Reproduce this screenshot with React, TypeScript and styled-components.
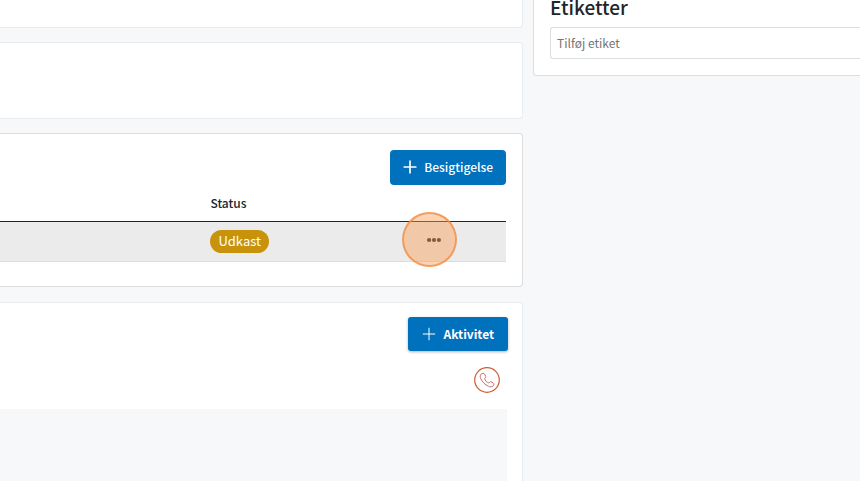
import React from "react";
import styled, { createGlobalStyle } from "styled-components";

const GlobalStyle = createGlobalStyle`
  * { box-sizing: border-box; }
  body {
    margin: 0;
    background: #f6f8fa;
    color: #212529;
    font-family: "Noto Sans CJK SC", "Noto Sans", sans-serif;
    font-size: 12px;
    line-height: 20px;
  }
  button, input { font: inherit; }
`;

const Page = styled.div`
  display: grid;
  grid-template-columns: minmax(0, 8fr) minmax(0, 5fr);
  gap: 10px;
  min-height: 100vh;
`;

const MainColumn = styled.main`
  display: flex;
  flex-direction: column;
  gap: 14px;
`;

const Card = styled.section<{ $strong?: boolean }>`
  background: #fff;
  border: 1px solid ${(p) => (p.$strong ? "#dcdddf" : "#e9ecef")};
  border-left: 0;
  border-radius: 0 4px 4px 0;
`;

const TopCard = styled(Card)`
  height: 28px;
  border-top: 0;
  border-radius: 0 0 4px 0;
`;

const EmptyCard = styled(Card)`
  height: 77px;
`;

const InspectionCard = styled(Card)`
  padding: 16px 16px 24px 0;
  margin-bottom: 1px;
`;

const ActivityCard = styled(Card)`
  flex: 1;
  display: flex;
  flex-direction: column;
  padding: 14px 14px 0 0;
  border-bottom: 0;
  border-radius: 0 4px 0 0;
`;

const Actions = styled.div`
  display: flex;
  justify-content: flex-end;
`;

const PrimaryButton = styled.button<{ $bold?: boolean }>`
  display: flex;
  align-items: center;
  gap: ${(p) => (p.$bold ? 8 : 7)}px;
  height: ${(p) => (p.$bold ? 34 : 35)}px;
  padding: ${(p) => (p.$bold ? "0 14px" : "0 13px 2px")};
  border: 0;
  border-radius: ${(p) => (p.$bold ? 3 : 4)}px;
  background: #0071bc;
  color: #fff;
  font-weight: ${(p) => (p.$bold ? 700 : 500)};
  box-shadow: ${(p) => (p.$bold ? "0 1px 3px rgba(0, 0, 0, 0.3)" : "none")};
  cursor: pointer;
`;

const Table = styled.table`
  width: 100%;
  table-layout: fixed;
  border-collapse: collapse;
`;

const HeadCell = styled.th<{ $width?: string }>`
  width: ${(p) => p.$width ?? "auto"};
  height: 36px;
  padding: 0 8px;
  border-bottom: 1px solid #212529;
  font-weight: 500;
  text-align: left;
`;

const Cell = styled.td`
  height: 40px;
  padding: 0 8px;
  background: #ebebeb;
  border-bottom: 1px solid #dcdddf;
`;

const Badge = styled.span`
  display: block;
  width: max-content;
  padding: 0 8px 2px;
  border-radius: 12px;
  background: #c8930a;
  color: #fff;
  font-size: 13px;
  line-height: 21px;
`;

const MenuButton = styled.button`
  position: relative;
  display: flex;
  align-items: center;
  justify-content: center;
  width: 32px;
  height: 22px;
  margin: 0 48px 2px auto;
  padding: 0;
  border: 0;
  background: none;
  color: #212529;
  cursor: pointer;
`;

const ClickMarker = styled.span`
  position: absolute;
  top: -17px;
  left: -16px;
  width: 55px;
  height: 55px;
  border: 2px solid rgba(240, 140, 70, 0.75);
  border-radius: 50%;
  background: rgba(248, 160, 88, 0.45);
  pointer-events: none;
`;

const PhoneRow = styled.div`
  display: flex;
  justify-content: flex-end;
  padding: 16px 8px;
`;

const PhoneButton = styled.button`
  display: flex;
  padding: 0;
  border: 0;
  border-radius: 50%;
  background: none;
  cursor: pointer;
`;

const ActivityPanel = styled.div`
  flex: 1;
  margin-right: 1px;
  background: #f6f8fa;
`;

const LabelsCard = styled.aside`
  align-self: start;
  padding: 0 0 16px 16px;
  background: #fff;
  border: 1px solid #dcdddf;
  border-width: 0 0 1px 1px;
  border-radius: 0 0 0 4px;
`;

const LabelsTitle = styled.h2`
  margin: 0 0 13px;
  font-size: 19px;
  font-weight: 500;
  line-height: 14px;
`;

const LabelInput = styled.input`
  display: block;
  width: 100%;
  height: 32px;
  padding: 0 6px 1px;
  border: 1px solid #dcdddf;
  border-right: 0;
  border-radius: 3px 0 0 3px;
  color: #212529;
  &::placeholder { color: #757575; opacity: 1; }
`;

const Plus = ({ size, stroke }: { size: number; stroke: number }) => (
  <svg width={size} height={size} viewBox="0 0 14 14" fill="none" stroke="currentColor" strokeWidth={stroke} strokeLinecap="round" aria-hidden="true">
    <path d="M7 1.2v11.6M1.2 7h11.6" />
  </svg>
);

const Dots = () => (
  <svg width="14" height="6" viewBox="0 0 14 6" fill="currentColor" aria-hidden="true">
    <circle cx="2.1" cy="3" r="2.1" />
    <circle cx="7" cy="3" r="2.1" />
    <circle cx="11.9" cy="3" r="2.1" />
  </svg>
);

const PhoneIcon = () => (
  <svg width="26" height="26" viewBox="0 0 26 26" fill="none" aria-hidden="true">
    <circle cx="13" cy="13" r="12.3" stroke="#cf5a32" strokeWidth="1.2" />
    <path
      d="M7 7.2C8 6.2 9.8 6 10.6 7.2L11.7 9.2C12.2 10.2 10.6 10.9 10.7 11.8C11 13.5 13 15.5 14.6 15.8C15.5 15.9 16 14.4 17.1 14.8L19 15.9C20.3 16.7 20 18.3 19 19.1C17.9 20.1 16.2 20.1 14.5 19.3C11 17.7 8.3 15 6.8 11.8C6 10 6 8.2 7 7.2Z"
      stroke="#cf6b6b"
      strokeWidth="1"
    />
  </svg>
);

export default function App() {
  return (
    <>
      <GlobalStyle />
      <Page>
        <MainColumn>
          <TopCard />
          <EmptyCard />
          <InspectionCard $strong>
            <Actions>
              <PrimaryButton type="button">
                <Plus size={14} stroke={1.7} />
                Besigtigelse
              </PrimaryButton>
            </Actions>
            <Table>
              <thead>
                <tr>
                  <HeadCell $width="40%" aria-label="Besigtigelse" />
                  <HeadCell scope="col">Status</HeadCell>
                  <HeadCell $width="30%" aria-label="Handlinger" />
                </tr>
              </thead>
              <tbody>
                <tr>
                  <Cell />
                  <Cell>
                    <Badge>Udkast</Badge>
                  </Cell>
                  <Cell>
                    <MenuButton type="button" aria-label="Flere handlinger">
                      <Dots />
                      <ClickMarker />
                    </MenuButton>
                  </Cell>
                </tr>
              </tbody>
            </Table>
          </InspectionCard>
          <ActivityCard>
            <Actions>
              <PrimaryButton type="button" $bold>
                <Plus size={14} stroke={1} />
                Aktivitet
              </PrimaryButton>
            </Actions>
            <PhoneRow>
              <PhoneButton type="button" aria-label="Ring op">
                <PhoneIcon />
              </PhoneButton>
            </PhoneRow>
            <ActivityPanel />
          </ActivityCard>
        </MainColumn>
        <LabelsCard>
          <LabelsTitle>Etiketter</LabelsTitle>
          <LabelInput type="text" placeholder="Tilføj etiket" aria-label="Tilføj etiket" />
        </LabelsCard>
      </Page>
    </>
  );
}
